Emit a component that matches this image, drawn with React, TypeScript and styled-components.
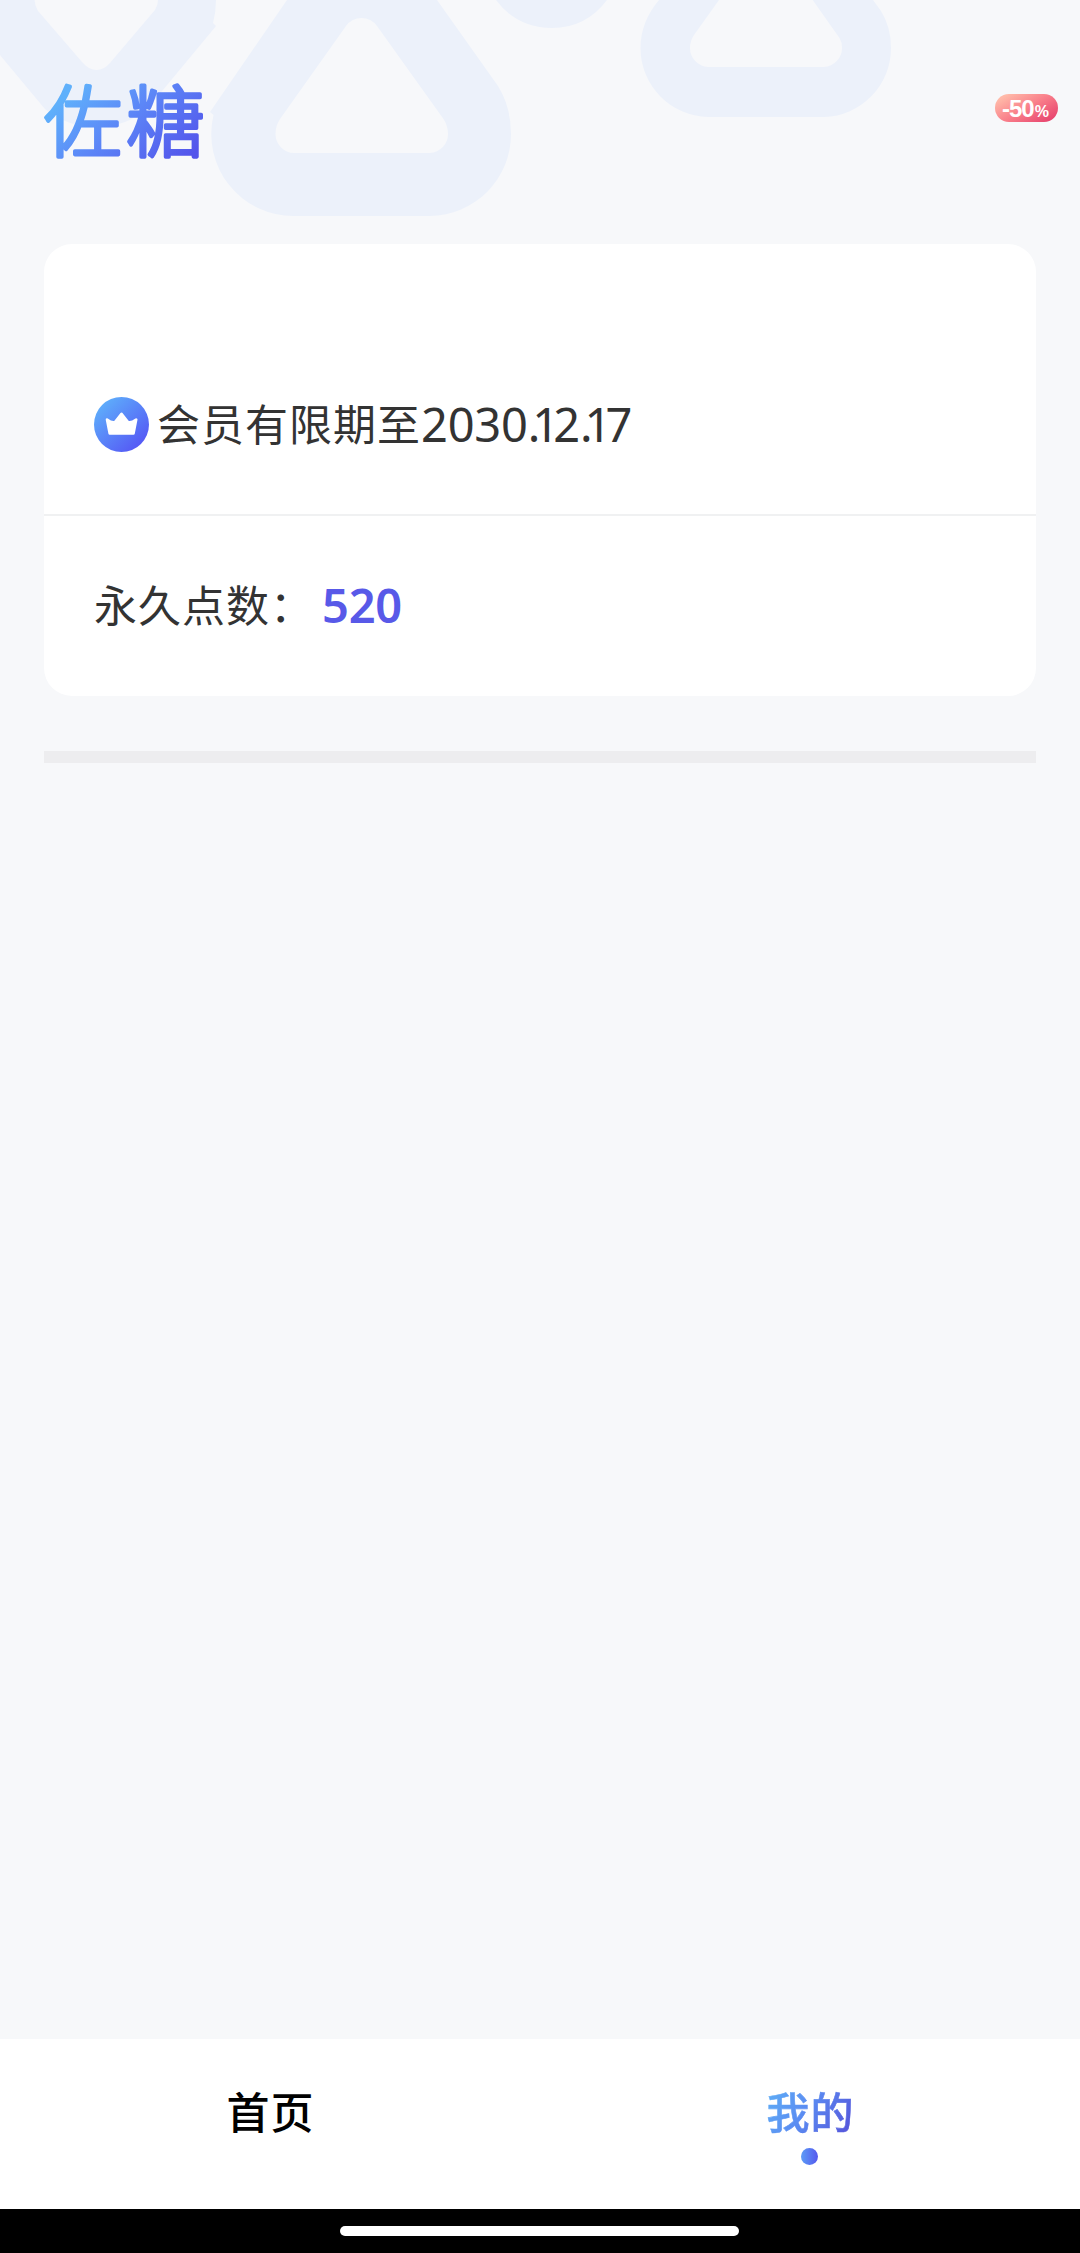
import React from 'react';
import styled, { createGlobalStyle } from 'styled-components';

const GlobalStyle = createGlobalStyle`
  * { box-sizing: border-box; }
  body { margin: 0; background: #f7f8fa; }
`;

const cjk = '"Noto Sans CJK SC", sans-serif';

const Screen = styled.div`
  position: relative;
  display: flex;
  flex-direction: column;
  width: 1080px;
  height: 2253px;
  overflow: hidden;
  background: #f7f8fa;
  font-family: ${cjk};
`;

const Backdrop = styled.svg`
  position: absolute;
  top: 0;
  left: 0;
`;

const Header = styled.header`
  position: relative;
  display: flex;
  justify-content: space-between;
  height: 244px;
  padding: 42px 22px 0 38px;
`;

const Logo = styled.svg`
  display: block;
  font-family: ${cjk};
  font-weight: 300;
`;

const Discount = styled.div`
  display: flex;
  align-items: baseline;
  justify-content: center;
  width: 63px;
  height: 28px;
  margin-top: 52px;
  padding-right: 2px;
  border-radius: 14px;
  background: linear-gradient(150deg, #ffb9a8 12%, #f97f8a 50%, #e63f6c 95%);
  color: #fff;
  font: 700 24px/30px "Liberation Sans", sans-serif;
  letter-spacing: -1px;
`;

const Percent = styled.span`
  margin-left: 1px;
  font-size: 16px;
  letter-spacing: 0;
`;

const Card = styled.section`
  position: relative;
  display: flex;
  flex-direction: column;
  height: 452px;
  margin: 0 44px;
  border-radius: 28px;
  background: #fff;
`;

const Row = styled.div<{ $height: number; $top: number; $line?: boolean }>`
  display: flex;
  align-items: flex-start;
  height: ${p => p.$height}px;
  padding: ${p => p.$top}px 50px 0;
  border-bottom: ${p => (p.$line ? '2px solid #f0f1f2' : 'none')};
`;

const CrownIcon = styled.svg`
  flex: none;
  margin-right: 8px;
`;

const Label = styled.span`
  margin-top: -2px;
  color: #333;
  font-size: 43px;
  line-height: 55px;
  letter-spacing: 1px;
  white-space: nowrap;
`;

const Digits = styled.span<{ $accent?: boolean }>`
  margin-left: ${p => (p.$accent ? 8 : 0)}px;
  color: ${p => (p.$accent ? '#5859e8' : '#333')};
  font-family: "Noto Sans", sans-serif;
  font-size: 47px;
  font-weight: ${p => (p.$accent ? 600 : 400)};
  line-height: 55px;
  letter-spacing: -0.2px;
  white-space: nowrap;
`;

const Kern = styled.span<{ $by: number }>`
  letter-spacing: ${p => p.$by}px;
`;

const Strip = styled.div`
  height: 12px;
  margin: 55px 44px 0;
  background: #ededef;
`;

const Nav = styled.nav`
  display: flex;
  height: 170px;
  margin-top: auto;
  background: #fff;
`;

const Tab = styled.div`
  display: flex;
  flex: 1;
  flex-direction: column;
  align-items: center;
  padding-top: 43px;
`;

const TabLabel = styled.span<{ $active?: boolean }>`
  padding-left: 1px;
  color: ${p => (p.$active ? 'transparent' : '#000')};
  background: ${p => (p.$active ? 'linear-gradient(120deg, #5ea9f5 10%, #5b8df2 45%, #5558dc 90%)' : 'none')};
  background-clip: ${p => (p.$active ? 'text' : 'border-box')};
  -webkit-text-stroke: ${p => (p.$active ? '0.6px transparent' : '0')};
  font-size: 43px;
  font-weight: 500;
  line-height: 56px;
  letter-spacing: 1px;
`;

const Dot = styled.i`
  width: 17px;
  height: 17px;
  margin: 10px 1px 0 0;
  border-radius: 50%;
  background: linear-gradient(90deg, #5c9cf6, #5558ee);
`;

const SystemBar = styled.footer`
  display: flex;
  justify-content: center;
  height: 44px;
  padding: 17px 1px 0 0;
  background: #000;
`;

const Handle = styled.div`
  width: 399px;
  height: 10px;
  border-radius: 5px;
  background: #fff;
`;

export default function App() {
  return (
    <Screen>
      <GlobalStyle />
      <Backdrop width="1080" height="230" viewBox="0 0 1080 230" fill="#ecf1fa" fillRule="evenodd">
        <path d="M0 0H216Q216 12 213 23L216 26L148 108Q126 127 97 127Q67 127 45 109L0 55ZM34.500 0Q35 6 38 11L82 62Q89 70 96.500 70Q104 70 110 63L155 10Q158 5 158 0Z" />
        <path d="M287 0H437L498 86Q511 107 511 134A82 82 0 0 1 430 216H294A82 82 0 0 1 213.500 115L210 112ZM346 26L280 119Q275.500 126 275.500 134A19 19 0 0 0 294 153H430A19 19 0 0 0 448 134Q448 126 443.500 119L377 26Q371 18 361.500 18Q352 18 346 26Z" />
        <path d="M496 0Q517 28 552 28Q586 28 607 0Z" />
        <path d="M659 0H719L694 35Q690 41 690 48A19 19 0 0 0 708 67H824A19 19 0 0 0 842 48Q842 42 839.500 38L812.700 0H873L881 11Q891 27 891 48A69 69 0 0 1 824 117H708A69 69 0 0 1 640.500 48Q640.500 22 659 0Z" />
      </Backdrop>
      <Header>
        <Logo width="180" height="146" viewBox="38 42 180 146">
          <defs>
            <linearGradient id="brand" gradientUnits="userSpaceOnUse" x1="75" y1="70" x2="170" y2="175">
              <stop offset="0.1" stopColor="#5fb0fb" />
              <stop offset="0.5" stopColor="#5c86f7" />
              <stop offset="1" stopColor="#5354eb" />
            </linearGradient>
          </defs>
          <text x="44 126.500" y="150.500" fontSize="78" fill="url(#brand)" stroke="url(#brand)" strokeWidth="3.600" strokeLinejoin="round">佐糖</text>
        </Logo>
        <Discount>-50<Percent>%</Percent></Discount>
      </Header>
      <Card>
        <Row $height={272} $top={153} $line>
          <CrownIcon width="55" height="55" viewBox="0 0 55 55">
            <defs>
              <linearGradient id="crown" x1="0.1" y1="0.1" x2="0.85" y2="0.9">
                <stop offset="0" stopColor="#5eb0fb" />
                <stop offset="1" stopColor="#5558f5" />
              </linearGradient>
            </defs>
            <circle cx="27.500" cy="27.500" r="27.500" fill="url(#crown)" />
            <path d="M13 22.500Q17.500 26 20.800 25.200L27.500 16.800L34.200 25.200Q37.500 26 42.200 22.500L39.500 36.500H15.700Z" fill="#fff" stroke="#fff" strokeWidth="2.600" strokeLinejoin="round" />
          </CrownIcon>
          <Label>会员有限期至</Label>
          <Digits>2030<Kern $by={-8}>.</Kern><Kern $by={-6}>1</Kern>2<Kern $by={-8}>.</Kern><Kern $by={-6}>1</Kern>7</Digits>
        </Row>
        <Row $height={180} $top={62}>
          <Label>永久点数：</Label>
          <Digits $accent>520</Digits>
        </Row>
      </Card>
      <Strip />
      <Nav>
        <Tab>
          <TabLabel>首页</TabLabel>
        </Tab>
        <Tab>
          <TabLabel $active>我的</TabLabel>
          <Dot />
        </Tab>
      </Nav>
      <SystemBar>
        <Handle />
      </SystemBar>
    </Screen>
  );
}
